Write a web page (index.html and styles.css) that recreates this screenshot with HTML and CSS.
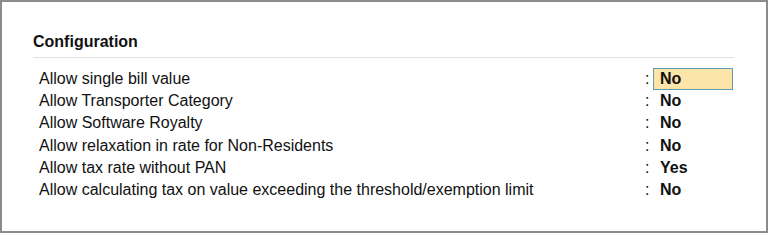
FILE: index.html
```html
<!DOCTYPE html>
<html lang="en">
<head>
  <meta charset="UTF-8" />
  <title>Configuration</title>
  <link rel="stylesheet" href="styles.css">
</head>
<body>

<div class="frame">
  <div class="section-title">Configuration</div>

  <div class="config-grid">
    <div class="label">Allow single bill value</div>
    <div class="colon">:</div>
    <div class="value"><span class="field active">No</span></div>

    <div class="label">Allow Transporter Category</div>
    <div class="colon">:</div>
    <div class="value"><span class="field">No</span></div>

    <div class="label">Allow Software Royalty</div>
    <div class="colon">:</div>
    <div class="value"><span class="field">No</span></div>

    <div class="label">Allow relaxation in rate for Non-Residents</div>
    <div class="colon">:</div>
    <div class="value"><span class="field">No</span></div>

    <div class="label">Allow tax rate without PAN</div>
    <div class="colon">:</div>
    <div class="value"><span class="field">Yes</span></div>

    <div class="label">Allow calculating tax on value exceeding the threshold/exemption limit</div>
    <div class="colon">:</div>
    <div class="value"><span class="field">No</span></div>
  </div>
</div>

</body>
</html>
```

FILE: styles.css
```css
* {
  box-sizing: border-box;
}
body {
  margin: 0;
  font-family: "Liberation Sans", Arial, sans-serif;
  color: #111;
  background-color: #fff;
}
.frame {
  width: 768px;
  height: 233px;
  border: 2px solid #8c8c8c;
  padding: 30px 32px 0 31px;
}
.section-title {
  font-size: 16px;
  font-weight: bold;
  line-height: 20px;
  padding-bottom: 5px;
  border-bottom: 1px solid #e2e2e2;
}
.config-grid {
  display: grid;
  grid-template-columns: 606px 8px 80px;
  grid-auto-rows: 22.2px;
  margin-top: 10px;
  padding-left: 6px;
  font-size: 16px;
  line-height: 22px;
}
.field {
  display: block;
  height: 22px;
  padding-left: 6px;
  font-weight: bold;
  border: 1px solid transparent;
  line-height: 20px;
}
.field.active {
  background-color: #fde4a9;
  border-color: #5f9cb3;
}
```
